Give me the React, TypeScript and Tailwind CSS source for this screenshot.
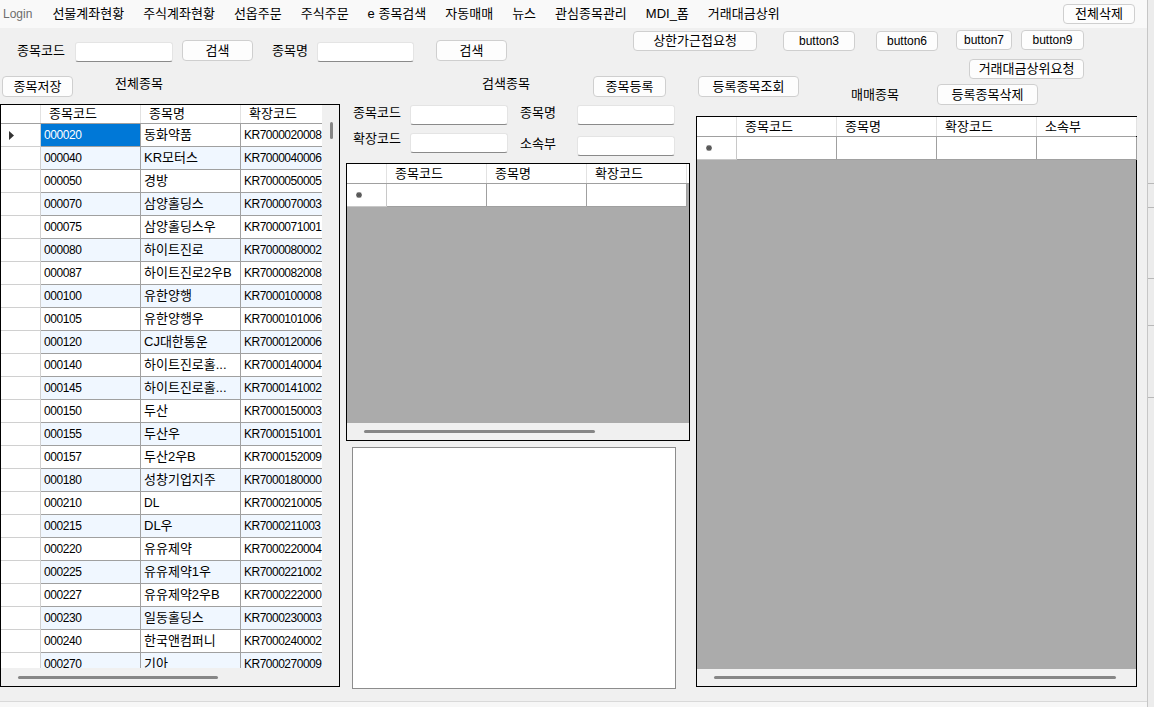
import React from "react";

const rows: [string, string, string][] = [
  ["000020", "동화약품", "KR7000020008"],
  ["000040", "KR모터스", "KR7000040006"],
  ["000050", "경방", "KR7000050005"],
  ["000070", "삼양홀딩스", "KR7000070003"],
  ["000075", "삼양홀딩스우", "KR7000071001"],
  ["000080", "하이트진로", "KR7000080002"],
  ["000087", "하이트진로2우B", "KR7000082008"],
  ["000100", "유한양행", "KR7000100008"],
  ["000105", "유한양행우", "KR7000101006"],
  ["000120", "CJ대한통운", "KR7000120006"],
  ["000140", "하이트진로홀...", "KR7000140004"],
  ["000145", "하이트진로홀...", "KR7000141002"],
  ["000150", "두산", "KR7000150003"],
  ["000155", "두산우", "KR7000151001"],
  ["000157", "두산2우B", "KR7000152009"],
  ["000180", "성창기업지주", "KR7000180000"],
  ["000210", "DL", "KR7000210005"],
  ["000215", "DL우", "KR7000211003"],
  ["000220", "유유제약", "KR7000220004"],
  ["000225", "유유제약1우", "KR7000221002"],
  ["000227", "유유제약2우B", "KR7000222000"],
  ["000230", "일동홀딩스", "KR7000230003"],
  ["000240", "한국앤컴퍼니", "KR7000240002"],
  ["000270", "기아", "KR7000270009"],
];

const menu = ["선물계좌현황", "주식계좌현황", "선옵주문", "주식주문", "e 종목검색", "자동매매", "뉴스", "관심종목관리", "MDI_폼", "거래대금상위"];

const fs = (s?: React.ReactNode) => (typeof s === "string" && /[가-힣]/.test(s) ? "text-[13px]" : "text-[12px]");

function Btn({ children, className = "" }: { children: React.ReactNode; className?: string }) {
  return (
    <button className={`flex h-[20px] shrink-0 items-center justify-center rounded-[4px] border border-[#cfcfcf] bg-[#fdfdfd] ${fs(children)} ${className}`}>
      {children}
    </button>
  );
}

function Label({ children, className = "" }: { children: string; className?: string }) {
  return <div className={`shrink-0 text-[13px] ${className}`}>{children}</div>;
}

function TextBox({ className = "" }: { className?: string }) {
  return (
    <input
      readOnly
      className={`h-[20px] shrink-0 rounded-[3px] border border-[#e4e4e4] border-b-[#8a8a8a] bg-white outline-none ${className}`}
    />
  );
}

// small asterisk shown in the new-row header cell
function NewRowMark() {
  return (
    <svg width="6" height="6" viewBox="0 0 6 6" className="ml-[9px]">
      <path d="M3 0v6M0 3h6M0.8 0.8l4.4 4.4M5.2 0.8l-4.4 4.4" stroke="#555" strokeWidth="1.3" />
    </svg>
  );
}

function HeaderCell({ label, className = "" }: { label?: string; className?: string }) {
  return (
    <div className={`flex h-full shrink-0 items-center border-r border-[#e2e2e2] bg-white pl-[8px] text-[13px] ${className}`}>
      {label}
    </div>
  );
}

function EmptyGrid({ cols, width, height, thumbW }: { cols: string[]; width: string; height: string; thumbW: string }) {
  return (
    <div className={`flex shrink-0 flex-col border border-black bg-[#ababab] ${width} ${height}`}>
      <div className="flex h-[20px] shrink-0 border-b border-[#a0a0a0] bg-white">
        <HeaderCell className="w-[40px]" />
        {cols.map((c) => (
          <HeaderCell key={c} label={c} className="w-[100px]" />
        ))}
      </div>
      <div className="flex h-[23px] shrink-0">
        <div className="flex w-[40px] shrink-0 items-center border-r border-b border-[#c8c8c8] bg-white">
          <NewRowMark />
        </div>
        {cols.map((c) => (
          <div key={c} className="w-[100px] shrink-0 border-r border-b border-[#a0a0a0] bg-white" />
        ))}
      </div>
      <div className="flex-1" />
      <div className="flex h-[17px] shrink-0 items-center bg-[#f0f0f0] pl-[17px]">
        <div className={`h-[3px] rounded-full bg-[#868686] ${thumbW}`} />
      </div>
    </div>
  );
}

function StockGrid() {
  return (
    <div className="flex h-[583px] w-[340px] shrink-0 border border-black bg-[#f0f0f0]">
      <div className="flex w-[321px] shrink-0 flex-col">
        <div className="h-[563px] overflow-hidden">
          <div className="flex h-[19px] border-b border-[#a0a0a0] bg-white">
            <HeaderCell className="w-[40px]" />
            <HeaderCell label="종목코드" className="w-[100px]" />
            <HeaderCell label="종목명" className="w-[100px]" />
            <HeaderCell label="확장코드" className="w-[81px] border-r-0" />
          </div>
          {rows.map(([code, name, ext], i) => {
            const bg = i % 2 === 1 ? "bg-[#f0f7ff]" : "bg-white";
            return (
              <div key={code} className="flex h-[23px]">
                <div className="flex w-[40px] shrink-0 items-center border-r border-b border-[#d0d0d0] bg-white">
                  {i === 0 && (
                    <svg width="5" height="9" viewBox="0 0 5 9" className="ml-[8px]">
                      <path d="M0 0l5 4.5L0 9z" fill="#333" />
                    </svg>
                  )}
                </div>
                <div
                  className={`flex w-[100px] shrink-0 items-center border-r border-b border-[#a0a0a0] pl-[3px] tracking-[-0.4px] ${
                    i === 0 ? "bg-[#0078d7] text-white" : bg
                  }`}
                >
                  {code}
                </div>
                <div className={`flex w-[100px] shrink-0 items-center border-r border-b border-[#a0a0a0] pl-[3px] ${fs(name)} ${bg}`}>
                  {name}
                </div>
                <div className={`flex w-[81px] shrink-0 items-center border-b border-[#a0a0a0] pl-[3px] tracking-[-0.5px] ${bg}`}>
                  {ext}
                </div>
              </div>
            );
          })}
        </div>
        <div className="flex h-[18px] items-center pl-[17px]">
          <div className="h-[3px] w-[200px] rounded-full bg-[#868686]" />
        </div>
      </div>
      <div className="w-[17px] shrink-0 pl-[8px] pt-[17px]">
        <div className="h-[17px] w-[3px] rounded-full bg-[#868686]" />
      </div>
    </div>
  );
}

export default function App() {
  return (
    <div className="flex h-[707px] w-[1154px] overflow-hidden bg-[#f0f0f0] font-['Liberation_Sans','Noto_Sans_CJK_KR',sans-serif] text-[12px] text-black">
      <div className="flex w-[1147px] shrink-0 flex-col">
        {/* menu strip */}
        <div className="flex h-[28px] shrink-0 items-start bg-[#f9f9f9]">
          <div className="flex h-[28px] items-center gap-[19px] pl-[3px]">
            <span className="mr-[1px] text-[#6d6d6d]">Login</span>
            {menu.map((m) => (
              <span key={m} className={fs(m)}>
                {m}
              </span>
            ))}
          </div>
          <Btn className="mt-[4px] mr-[12px] ml-auto w-[72px]">전체삭제</Btn>
        </div>

        {/* search row */}
        <div className="flex h-[31px] shrink-0 items-start">
          <Label className="mt-[12px] ml-[17px] flex h-[21px] w-[58px] items-center">종목코드</Label>
          <TextBox className="mt-[14px] w-[98px]" />
          <Btn className="mt-[12px] ml-[9px] h-[21px] w-[71px]">검색</Btn>
          <Label className="mt-[12px] ml-[19px] flex h-[21px] w-[45px] items-center">종목명</Label>
          <TextBox className="mt-[14px] w-[97px]" />
          <Btn className="mt-[12px] ml-[22px] h-[21px] w-[71px]">검색</Btn>
          <Btn className="mt-[3px] ml-[126px] w-[124px]">상한가근접요청</Btn>
          <Btn className="mt-[3px] ml-[26px] w-[72px]">button3</Btn>
          <Btn className="mt-[3px] ml-[21px] w-[62px]">button6</Btn>
          <Btn className="mt-[2px] ml-[18px] w-[56px]">button7</Btn>
          <Btn className="mt-[2px] ml-[9px] w-[63px]">button9</Btn>
        </div>

        {/* section titles row */}
        <div className="flex h-[45px] shrink-0 items-start">
          <Btn className="mt-[17px] ml-[2px] h-[21px] w-[71px]">종목저장</Btn>
          <Label className="mt-[14px] ml-[42px] flex h-[21px] w-[48px] items-center">전체종목</Label>
          <Label className="mt-[14px] ml-[319px] flex h-[21px] w-[48px] items-center">검색종목</Label>
          <Btn className="mt-[17px] ml-[63px] h-[21px] w-[73px]">종목등록</Btn>
          <Btn className="mt-[17px] ml-[32px] h-[21px] w-[101px]">등록종목조회</Btn>
          <Label className="mt-[25px] ml-[52px] flex h-[21px] w-[48px] items-center">매매종목</Label>
          <div className="ml-[38px] flex shrink-0 flex-col">
            <Btn className="ml-[32px] w-[115px]">거래대금상위요청</Btn>
            <Btn className="mt-[5px] h-[21px] w-[101px]">등록종목삭제</Btn>
          </div>
        </div>

        {/* panels */}
        <div className="flex h-[583px] shrink-0">
          <StockGrid />

          <div className="ml-[6px] flex w-[344px] shrink-0 flex-col">
            <div className="mt-[1px] flex items-start">
              <Label className="ml-[7px] h-[16px] w-[57px] leading-[16px]">종목코드</Label>
              <TextBox className="h-[19px] w-[98px]" />
              <Label className="ml-[12px] h-[16px] w-[57px] leading-[16px]">종목명</Label>
              <TextBox className="h-[19px] w-[98px]" />
            </div>
            <div className="mt-[8px] flex items-start">
              <Label className="-mt-[2px] ml-[7px] h-[16px] w-[57px] leading-[16px]">확장코드</Label>
              <TextBox className="h-[19px] w-[98px]" />
              <Label className="mt-[3px] ml-[12px] h-[16px] w-[57px] leading-[16px]">소속부</Label>
              <TextBox className="mt-[3px] h-[19px] w-[98px]" />
            </div>
            <div className="mt-[7px]">
              <EmptyGrid cols={["종목코드", "종목명", "확장코드"]} width="w-[344px]" height="h-[278px]" thumbW="w-[231px]" />
            </div>
            <div className="mt-[6px] ml-[6px] h-[242px] w-[324px] shrink-0 border border-[#8c8c8c] bg-white" />
          </div>

          <div className="ml-[6px] flex w-[441px] shrink-0 flex-col">
            <div className="mt-[12px]">
              <EmptyGrid cols={["종목코드", "종목명", "확장코드", "소속부"]} width="w-[441px]" height="h-[571px]" thumbW="w-[402px]" />
            </div>
          </div>
        </div>

        <div className="h-[14px] shrink-0" />
        <div className="h-[6px] shrink-0 border-t border-[#d9d9d9] bg-[#f7f7f7]" />
      </div>

      {/* edge of the window behind */}
      <div className="flex w-[7px] shrink-0 flex-col border-l border-[#c6c6c6] bg-[#ececec]">
        <div className="h-[183px] shrink-0" />
        <div className="h-[24px] shrink-0 border-t border-[#b8b8b8]" />
        <div className="h-[71px] shrink-0 border-t border-[#b8b8b8]" />
        <div className="h-[47px] shrink-0 border-t border-[#b8b8b8]" />
        <div className="h-[72px] shrink-0 border-t border-[#b8b8b8]" />
        <div className="flex-1 border-t border-[#b8b8b8]" />
      </div>
    </div>
  );
}
